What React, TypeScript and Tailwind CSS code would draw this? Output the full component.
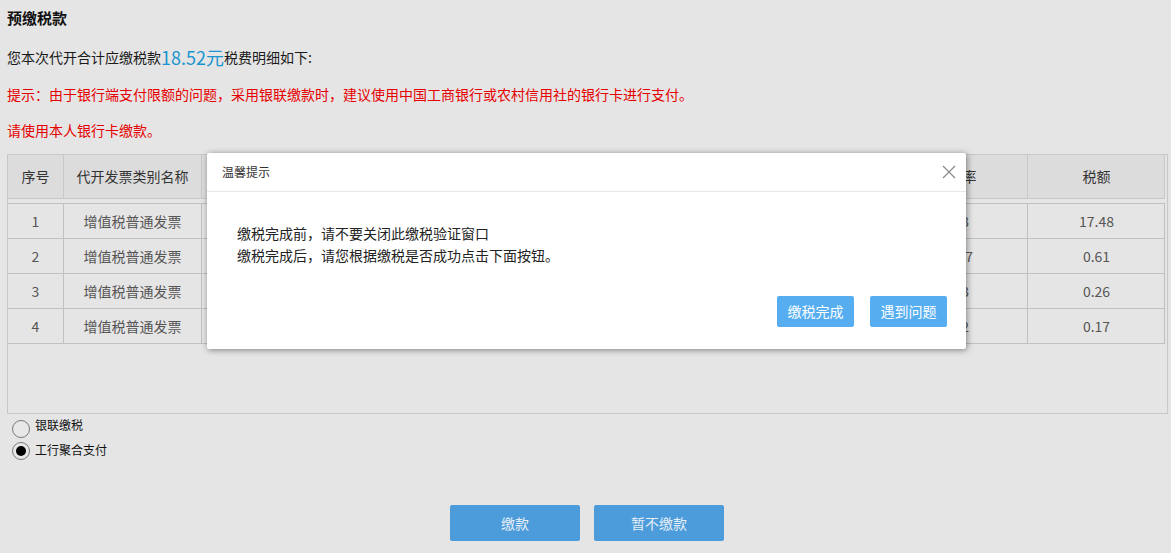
import React from "react";

const font = { fontFamily: '"Microsoft YaHei", "Noto Sans CJK SC", "Noto Sans", sans-serif' };

const cols = [
  { w: "w-[56px]", h: "序号" },
  { w: "w-[138px]", h: "代开发票类别名称" },
  { w: "w-[220px]", h: "货物或应税劳务名称" },
  { w: "w-[200px]", h: "金额（不含税）" },
  { w: "w-[262px]", h: "计税依据" },
  { w: "w-[144px]", h: "征收率" },
  { w: "w-[137px]", h: "税额" },
];

const rows = [
  ["1", "增值税普通发票", "服务费", "582.53", "582.53", "0.03", "17.48"],
  ["2", "增值税普通发票", "服务费", "20.17", "20.17", "0.027", "0.61"],
  ["3", "增值税普通发票", "服务费", "8.63", "8.63", "0.03", "0.26"],
  ["4", "增值税普通发票", "服务费", "5.62", "5.62", "0.02", "0.17"],
];

export default function App() {
  return (
    <div className="relative w-[1171px] h-[553px] bg-[#e5e5e5] overflow-hidden text-[#1a1a1a]" style={font}>
      <div className="pl-[7px]">
        <div className="h-[36px] leading-[36px] text-[15px] font-bold text-[#111]">预缴税款</div>
        <div className="h-[42px] flex items-center text-[14px] text-[#1a1a1a]">
          <span>您本次代开合计应缴税款</span>
          <span className="text-[18px] text-[#1a95cf] leading-none">18.52元</span>
          <span>税费明细如下:</span>
        </div>
        <div className="h-[32px] leading-[32px] text-[14px] text-[#e60000] whitespace-nowrap">
          提示：由于银行端支付限额的问题，采用银联缴款时，建议使用中国工商银行或农村信用社的银行卡进行支付。
        </div>
        <div className="h-[40px] leading-[40px] text-[14px] text-[#e60000]">请使用本人银行卡缴款。</div>
        <div className="h-[4px]" />
        {/* table */}
        <div className="w-[1161px] h-[260px] border border-[#c8c8c8] bg-[#e5e5e5]">
          <div className="flex h-[44px] w-[1157px] bg-[#dcdcdc] border-b border-r border-[#c8c8c8]">
            {cols.map((c, i) => (
              <div
                key={i}
                className={`${c.w} shrink-0 flex items-center justify-center text-[14px] text-[#333] ${i < cols.length - 1 ? "border-r border-[#c8c8c8]" : ""}`}
              >
                {c.h}
              </div>
            ))}
          </div>
          <div className="h-[4px]" />
          <div className="w-[1157px] border-t border-r border-[#c0c0c0]">
            {rows.map((r, ri) => (
              <div key={ri} className="flex h-[35px] border-b border-[#c0c0c0]">
                {r.map((v, i) => (
                  <div
                    key={i}
                    className={`${cols[i].w} shrink-0 flex items-center justify-center text-[14px] text-[#555] ${i < r.length - 1 ? "border-r border-[#c0c0c0]" : ""}`}
                  >
                    {v}
                  </div>
                ))}
              </div>
            ))}
          </div>
        </div>
        {/* radios */}
        <div className="pt-[4px] pl-[5px] text-[12px] text-[#111]">
          <label className="flex items-center h-[22px] gap-[5px]">
            <span className="w-[18px] h-[18px] rounded-full border border-[#7a7a7a] bg-[#e8e8e8] shrink-0" />
            <span className="relative -top-[4px]">银联缴税</span>
          </label>
          <label className="flex items-center h-[22px] gap-[5px]">
            <span className="w-[18px] h-[18px] rounded-full border border-[#7a7a7a] bg-[#e8e8e8] shrink-0 flex items-center justify-center">
              <span className="w-[10px] h-[10px] rounded-full bg-black" />
            </span>
            <span className="relative -top-[1px]">工行聚合支付</span>
          </label>
        </div>
      </div>
      <div className="flex justify-center gap-[14px] mt-[43px] pl-[3px]">
        <button className="w-[130px] h-[36px] rounded-[2px] bg-[#4c9bda] text-[14px] text-[#e6eef6]">缴款</button>
        <button className="w-[130px] h-[36px] rounded-[2px] bg-[#4c9bda] text-[14px] text-[#e6eef6]">暂不缴款</button>
      </div>

      {/* modal */}
      <div className="absolute left-[207px] top-[153px] w-[759px] h-[196px] bg-white rounded-[2px] shadow-[1px_1px_6px_rgba(0,0,0,0.45)] flex flex-col">
        <div className="h-[39px] flex items-center justify-between pl-[15px] pr-[9px] border-b border-[#e8e8e8]">
          <span className="text-[12px] text-[#333]">温馨提示</span>
          <svg width="14" height="14" viewBox="0 0 14 14" className="mr-[1px]">
            <path d="M1 1 L13 13 M13 1 L1 13" stroke="#8a8a8a" strokeWidth="1.2" fill="none" />
          </svg>
        </div>
        <div className="pl-[30px] pt-[30px] text-[14px] text-[#222] leading-[22px] h-[104px]">
          <div>缴税完成前，请不要关闭此缴税验证窗口</div>
          <div>缴税完成后，请您根据缴税是否成功点击下面按钮。</div>
        </div>
        <div className="flex justify-end gap-[16px] pr-[19px]">
          <button className="w-[77px] h-[31px] rounded-[2px] bg-[#56aef1] text-[14px] text-white">缴税完成</button>
          <button className="w-[77px] h-[31px] rounded-[2px] bg-[#56aef1] text-[14px] text-white">遇到问题</button>
        </div>
      </div>
    </div>
  );
}
